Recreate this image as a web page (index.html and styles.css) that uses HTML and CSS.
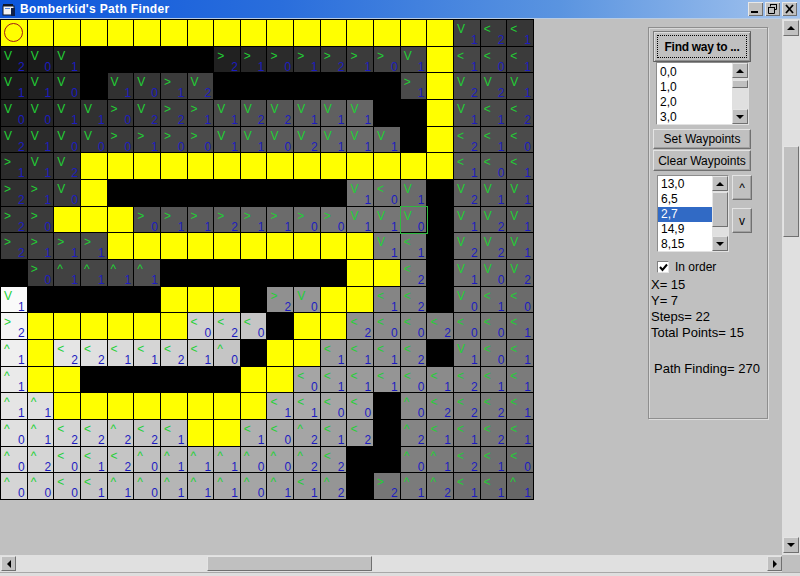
FILE: index.html
```html
<!DOCTYPE html>
<html lang="en">
<head>
<meta charset="utf-8">
<title>Bomberkid's Path Finder</title>
<link rel="stylesheet" href="styles.css">
</head>
<body>
<div class="window">
  <header class="titlebar">
    <svg class="appicon" width="14" height="14" viewBox="0 0 14 14">
      <rect x="1" y="1" width="10" height="3" fill="#101828"/>
      <rect x="1" y="3" width="11" height="9" fill="#f4f4f4" stroke="#101828"/>
      <rect x="9" y="5" width="4" height="8" fill="#10204a"/>
      <rect x="3" y="5" width="5" height="1" fill="#5a8adf"/>
    </svg>
    <span class="title">Bomberkid's Path Finder</span>
    <div class="controls">
      <span class="ctl"><svg width="15" height="14" viewBox="0 0 15 14"><rect x="3" y="9" width="7" height="2" fill="#000"/></svg></span>
      <span class="ctl"><svg width="15" height="14" viewBox="0 0 15 14"><path d="M5.5 2.5h6v5h-2M5.5 2.5v2M3.5 5.5h6v6h-6z" fill="none" stroke="#000"/><path d="M5 2.5h7M3 5.5h7" stroke="#000"/></svg></span>
      <span class="ctl"><svg width="15" height="14" viewBox="0 0 15 14"><path d="M4 3l7 8M11 3l-7 8" stroke="#000" stroke-width="1.8" fill="none"/></svg></span>
    </div>
  </header>

  <div class="main">
    <div class="client">
      <div class="board" id="board"></div>
      <aside class="frame">
        <button class="btn btn-find">Find way to ...</button>
        <div class="list list-a">
          <div class="items">
            <div class="item">0,0</div>
            <div class="item">1,0</div>
            <div class="item">2,0</div>
            <div class="item">3,0</div>
          </div>
          <div class="sb">
            <span class="sbtn"><i class="tri up"></i></span>
            <span class="sthumb sthumb-a"></span>
            <span class="strack"></span>
            <span class="sbtn"><i class="tri down"></i></span>
          </div>
        </div>
        <button class="btn btn-set">Set Waypoints</button>
        <button class="btn btn-clear">Clear Waypoints</button>
        <div class="way-row">
          <div class="list list-b">
            <div class="items">
              <div class="item">13,0</div>
              <div class="item">6,5</div>
              <div class="item selected">2,7</div>
              <div class="item">14,9</div>
              <div class="item">8,15</div>
            </div>
            <div class="sb">
              <span class="sbtn"><i class="tri up"></i></span>
              <span class="sthumb sthumb-b"></span>
              <span class="strack"></span>
              <span class="sbtn"><i class="tri down"></i></span>
            </div>
          </div>
          <div class="move">
            <button class="btn btn-up">^</button>
            <button class="btn btn-down">v</button>
          </div>
        </div>
        <label class="order">
          <span class="check"><svg width="11" height="11" viewBox="0 0 11 11"><path d="M2 5l2.5 3L9 2.5" fill="none" stroke="#000" stroke-width="2"/></svg></span>
          In order
        </label>
        <div class="info">
          <div>X= 15</div>
          <div>Y= 7</div>
          <div>Steps= 22</div>
          <div>Total Points= 15</div>
          <div class="finding">Path Finding= 270</div>
        </div>
      </aside>
    </div>
    <div class="vscroll">
      <span class="sbtn"><i class="tri up"></i></span>
      <span class="sthumb vthumb"></span>
      <span class="strack"></span>
      <span class="sbtn"><i class="tri down"></i></span>
    </div>
  </div>

  <div class="bottom">
    <div class="hscroll">
      <span class="sbtn hbtn"><i class="tri left"></i></span>
      <span class="hgap"></span>
      <span class="sthumb hthumb"></span>
      <span class="strack"></span>
      <span class="sbtn hbtn"><i class="tri right"></i></span>
    </div>
    <div class="corner"></div>
  </div>
  <div class="strip"></div>
</div>
<script src="script.js"></script>
</body>
</html>
```
FILE: styles.css
```css
* { box-sizing: border-box; }
html, body { margin: 0; padding: 0; }
body {
  width: 800px;
  height: 576px;
  overflow: hidden;
  background: #c0c0c0;
  font-family: "Liberation Sans", Arial, sans-serif;
  font-size: 12px;
  color: #000;
}
.window { display: flex; flex-direction: column; width: 800px; height: 576px; }

/* title bar */
.titlebar {
  display: flex;
  align-items: center;
  height: 19px;
  flex: none;
  padding-left: 2px;
  background: linear-gradient(90deg, #0c56dc 0%, #2a6edc 35%, #5a94e0 70%, #a4c4ee 100%);
  border-bottom: 1px solid #b8cce4;
}
.appicon { flex: none; margin-top: 1px; }
.title {
  margin-left: 4px;
  color: #fff;
  font-weight: bold;
  font-size: 12px;
  letter-spacing: 0.35px;
}
.controls { display: flex; gap: 2px; margin-left: auto; margin-right: 3px; }
.ctl {
  display: flex;
  width: 15px;
  height: 14px;
  background: #c0c0c0;
  box-shadow: inset 1px 1px 0 #e8e8e8, inset -1px -1px 0 #707070;
}

/* client area */
.main { display: flex; flex: none; height: 536px; }
.client { display: flex; align-items: flex-start; width: 782px; }

.board {
  display: grid;
  grid-template-columns: repeat(20, 1fr);
  grid-template-rows: repeat(18, 1fr);
  flex: none;
  width: 534px;
  height: 481px;
  border-left: 1px solid #000;
  border-top: 1px solid #000;
  background: #000;
}
.cell {
  position: relative;
  min-width: 0;
  min-height: 0;
  overflow: hidden;
  padding: 3px 2px 0 3px;
  border-right: 1px solid #000;
  border-bottom: 1px solid #000;
  font-size: 12px;
  line-height: 12px;
}
.cell.wall { background: #000; }
.cell.path { background: #ffff00; padding-top: 2px; }
.arrow { display: block; color: #22d035; }
.num { display: block; margin-top: -1px; text-align: right; color: #1c1cc0; }
.cell.current { overflow: visible; z-index: 1; outline: 1px solid #2fb840; }
.start {
  display: block;
  width: 19px;
  height: 19px;
  margin: 1px 0 0 0;
  border: 1px solid #a01818;
  border-radius: 50%;
}

/* control panel */
.frame {
  display: flex;
  flex-direction: column;
  align-items: flex-start;
  flex: none;
  width: 120px;
  height: 392px;
  margin: 8px 0 0 114px;
  padding-top: 3px;
  border: 1px solid #8e8e8e;
  box-shadow: inset 1px 1px 0 #d8d8d8, 1px 1px 0 #dcdcdc;
}
.btn {
  display: block;
  padding: 0;
  background: #c0c0c0;
  font-family: inherit;
  font-size: 12px;
  color: #000;
  border: 1px solid;
  border-color: #e4e4e4 #707070 #707070 #e4e4e4;
  box-shadow: inset -1px -1px 0 #a0a0a0;
}
.btn-find {
  width: 98px;
  height: 31px;
  margin-left: 4px;
  font-weight: bold;
  letter-spacing: -0.3px;
  border-color: #7c7c7c #606060 #606060 #7c7c7c;
  box-shadow: inset 1px 1px 0 #dcdcdc, inset -1px -1px 0 #909090;
  outline: 1px dotted #000;
  outline-offset: -5px;
}
.btn-set { width: 98px; height: 20px; margin: 4px 0 0 4px; }
.btn-clear { width: 98px; height: 21px; margin: 1px 0 0 4px; }

.list {
  display: flex;
  flex: none;
  border: 1px solid;
  border-color: #8c8c8c #e2e2e2 #e2e2e2 #8c8c8c;
  background: #fff;
}
.list-a { width: 93px; height: 63px; margin: 0 0 0 7px; }
.list-b { width: 72px; height: 77px; }
.items { flex: 1; min-width: 0; overflow: hidden; padding-top: 2px; }
.list-b .items { padding-top: 1px; }
.item { height: 15px; padding-left: 3px; line-height: 15px; font-size: 12px; }
.item.selected { background: #316ac5; color: #fff; }

.sb { display: flex; flex-direction: column; flex: none; width: 16px; background: #e0e0e0; }
.sbtn {
  display: flex;
  align-items: center;
  justify-content: center;
  flex: none;
  height: 15px;
  background: #c0c0c0;
  border: 1px solid;
  border-color: #e4e4e4 #707070 #707070 #e4e4e4;
}
.sthumb {
  display: block;
  flex: none;
  background: #c0c0c0;
  border: 1px solid;
  border-color: #e4e4e4 #707070 #707070 #e4e4e4;
}
.strack { display: block; flex: 1; min-height: 0; min-width: 0; }
.sthumb-a { height: 8px; margin-top: 2px; }
.sthumb-b { height: 35px; margin-top: 1px; }
.tri { display: block; width: 0; height: 0; border: 4px solid transparent; }
.tri.up { border-top: 0; border-bottom-color: #000; }
.tri.down { border-bottom: 0; border-top-color: #000; }
.tri.left { border-left: 0; border-right-color: #000; }
.tri.right { border-right: 0; border-left-color: #000; }

.way-row { display: flex; align-items: flex-start; gap: 3px; margin: 4px 0 0 8px; }
.move { display: flex; flex-direction: column; gap: 8px; }
.btn-up { width: 20px; height: 25px; }
.btn-down { width: 20px; height: 25px; }

.order { display: flex; align-items: center; gap: 6px; margin: 8px 0 0 8px; height: 14px; font-size: 12px; }
.check {
  display: block;
  width: 12px;
  height: 12px;
  background: #fff;
  border: 1px solid;
  border-color: #808080 #e4e4e4 #e4e4e4 #808080;
}
.check svg { display: block; }

.info { margin: 3px 0 0 2px; font-size: 13px; line-height: 16px; }
.finding { margin: 20px 0 0 3px; }

/* window scrollbars */
.vscroll {
  display: flex;
  flex-direction: column;
  flex: none;
  width: 18px;
  padding: 1px 1px 2px;
  background: #e0e0e0;
}
.vscroll .sbtn { height: 16px; }
.vthumb { height: 91px; margin-top: 110px; }

.bottom { display: flex; flex: none; height: 17px; }
.hscroll {
  display: flex;
  align-items: stretch;
  width: 782px;
  padding: 1px 0 1px 1px;
  background: #e0e0e0;
}
.hbtn { width: 15px; height: auto; }
.hgap { flex: none; width: 191px; }
.hthumb { width: 165px; }
.corner { flex: 1; background: #c0c0c0; }
.strip { flex: 1; background: #dedede; border-top: 1px solid #a8a8a8; }
```
FILE: script.js
```js
var rows = [
  "O Y Y Y Y Y Y Y Y Y Y Y Y Y Y Y Y V1 <2 <1",
  "V2 V0 V1 K K K K K >2 >1 >0 >1 >2 >1 >0 V1 Y <1 <0 <1",
  "V1 V1 V0 K V1 V0 >1 V2 K K K K K K K >1 Y V2 V2 V1",
  "V0 V0 V1 V1 >0 V2 >2 >1 V1 V2 V2 V1 V1 V1 K K Y V1 <1 <2",
  "V2 V1 V0 V0 >0 >1 >0 >0 V1 V1 V0 V2 V1 V1 V1 K Y <2 <1 <0",
  ">1 V1 V2 Y Y Y Y Y Y Y Y Y Y Y Y Y Y <1 <0 <1",
  ">2 >1 V0 Y K K K K K K K K K V1 <0 V1 K V2 V1 V1",
  ">2 >0 Y Y Y >0 >1 >1 >2 >1 >1 >0 >0 V1 V1 V0 K V1 V2 V1",
  ">2 >1 >1 >1 Y Y Y Y Y Y Y Y Y Y V1 <1 K V2 V2 V1",
  "K >0 ^1 ^1 ^1 ^1 K K K K K K K Y Y <2 K V1 V0 V2",
  "V1 K K K K K Y Y Y K >2 V0 Y Y <1 <2 K V0 <1 <0",
  ">2 Y Y Y Y Y Y <0 <2 <0 K Y Y <2 <0 <0 <2 <0 <0 <1",
  "^1 Y <2 <2 <1 <1 <2 <1 ^0 K Y Y <1 <1 <1 <2 K V1 <0 <1",
  "^1 Y Y K K K K K K Y Y <0 <1 <1 <1 <0 <1 <2 <1 <1",
  "^1 ^1 Y Y Y Y Y Y Y Y <1 <1 <0 <0 K ^0 <2 <2 <2 <1",
  "^0 ^1 <2 <2 ^2 <2 <1 Y Y <1 <0 ^2 <1 <2 K ^2 <1 <1 <2 <1",
  "^0 ^2 <0 <1 <2 ^0 ^1 ^1 ^1 ^0 ^0 ^2 <2 K K ^0 ^1 <2 <1 <0",
  "^0 ^0 <0 <1 ^1 ^0 ^1 ^1 ^1 ^0 ^1 <1 ^2 K >2 ^1 ^2 <1 <1 ^1"
].map(function (r) { return r.split(" "); });

/* Cell shade follows the walking distance from the flood origin. */
var dist = rows.map(function (r) { return r.map(function () { return -1; }); });
var queue = [[10, 0]];
dist[10][0] = 0;
while (queue.length) {
  var p = queue.shift();
  [[1, 0], [-1, 0], [0, 1], [0, -1]].forEach(function (d) {
    var y = p[0] + d[0], x = p[1] + d[1];
    if (y < 0 || y >= 18 || x < 0 || x >= 20) return;
    if (rows[y][x] === "K" || dist[y][x] >= 0) return;
    dist[y][x] = dist[p[0]][p[1]] + 1;
    queue.push([y, x]);
  });
}

var board = document.getElementById("board");
rows.forEach(function (row, y) {
  row.forEach(function (tok, x) {
    var c = document.createElement("div");
    c.className = "cell";
    if (tok === "K") {
      c.classList.add("wall");
    } else if (tok === "Y" || tok === "O") {
      c.classList.add("path");
      if (tok === "O") {
        var s = document.createElement("span");
        s.className = "start";
        c.appendChild(s);
      }
    } else {
      var g = Math.max(20, Math.round(250 - dist[y][x] * 5.3));
      c.style.background = "rgb(" + g + "," + g + "," + g + ")";
      var a = document.createElement("span");
      a.className = "arrow";
      a.textContent = tok[0];
      var n = document.createElement("span");
      n.className = "num";
      n.textContent = tok[1];
      c.appendChild(a);
      c.appendChild(n);
      if (x === 15 && y === 7) c.classList.add("current");
    }
    board.appendChild(c);
  });
});
```
